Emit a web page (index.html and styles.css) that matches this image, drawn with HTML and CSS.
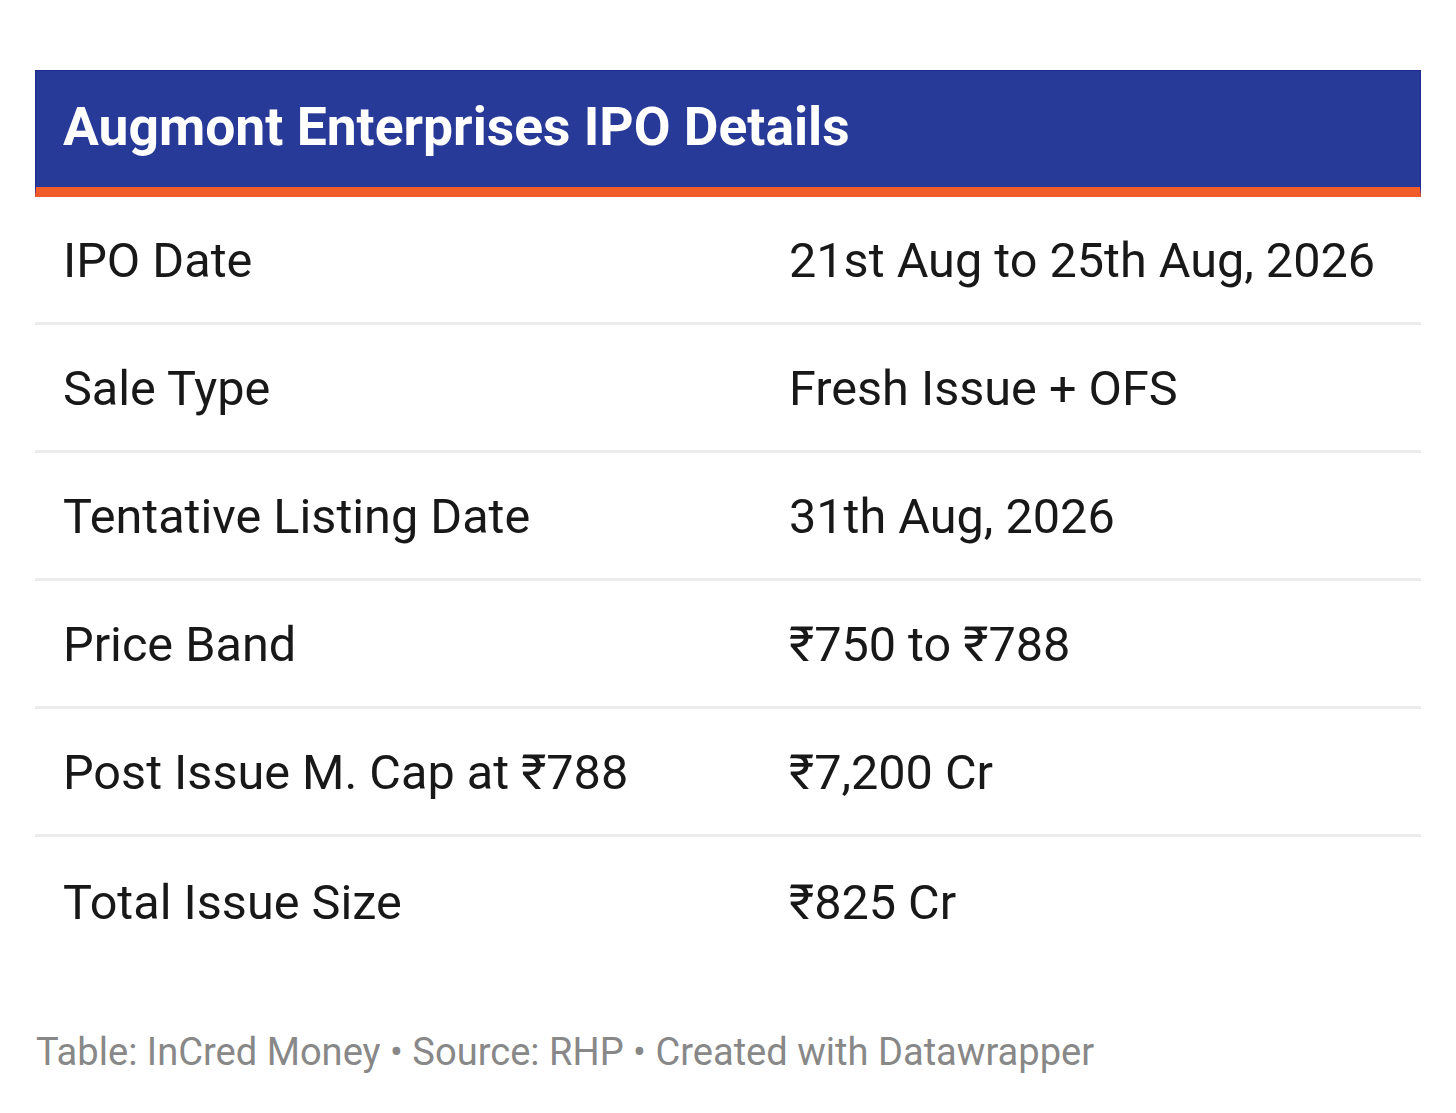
FILE: index.html
```html
<!DOCTYPE html>
<html lang="en">
<head>
<meta charset="utf-8">
<title>Augmont Enterprises IPO Details</title>
<link rel="stylesheet" href="styles.css">
</head>
<body>
<div class="chart">
  <div class="header">
    <h1 class="title">Augmont Enterprises IPO Details</h1>
  </div>
  <div class="table">
    <div class="row">
      <div class="cell">IPO Date</div>
      <div class="cell">21st Aug to 25th Aug, 2026</div>
    </div>
    <div class="row">
      <div class="cell">Sale Type</div>
      <div class="cell">Fresh Issue + OFS</div>
    </div>
    <div class="row">
      <div class="cell">Tentative Listing Date</div>
      <div class="cell">31th Aug, 2026</div>
    </div>
    <div class="row">
      <div class="cell">Price Band</div>
      <div class="cell">₹750 to ₹788</div>
    </div>
    <div class="row">
      <div class="cell">Post Issue M. Cap at ₹788</div>
      <div class="cell">₹7,200 Cr</div>
    </div>
    <div class="row last">
      <div class="cell">Total Issue Size</div>
      <div class="cell">₹825 Cr</div>
    </div>
  </div>
  <div class="footer">Table: InCred Money • Source: RHP • Created with Datawrapper</div>
</div>
</body>
</html>
```
FILE: styles.css
```css
html, body {
  margin: 0;
  padding: 0;
  background: #ffffff;
}
body {
  font-family: Roboto, "Noto Sans", "DejaVu Sans", sans-serif;
}
.chart {
  width: 1386px;
  margin: 70px 0 0 35px;
}
.header {
  box-sizing: border-box;
  background: #283a97;
  border: 1px solid #1d2c8f;
  border-bottom: 10px solid #f15a29;
  height: 127px;
  display: flex;
  align-items: center;
  padding-left: 27px;
}
.title {
  margin: 0;
  font-size: 53.4px;
  font-weight: 700;
  color: #ffffff;
  line-height: 1;
  padding-bottom: 4px;
}
.table {
  display: flex;
  flex-direction: column;
}
.row {
  display: grid;
  grid-template-columns: 726px 1fr;
  height: 128px;
  box-sizing: border-box;
  border-bottom: 3px solid #ececec;
  align-items: center;
}
.row.last {
  border-bottom: none;
}
.cell {
  padding-left: 28px;
  padding-top: 4px;
  font-size: 48.6px;
  color: #181818;
  line-height: 1.2;
}
.footer {
  margin-top: 65px;
  font-size: 38.1px;
  line-height: 1.2;
  color: #888888;
  padding-left: 1px;
}
```
